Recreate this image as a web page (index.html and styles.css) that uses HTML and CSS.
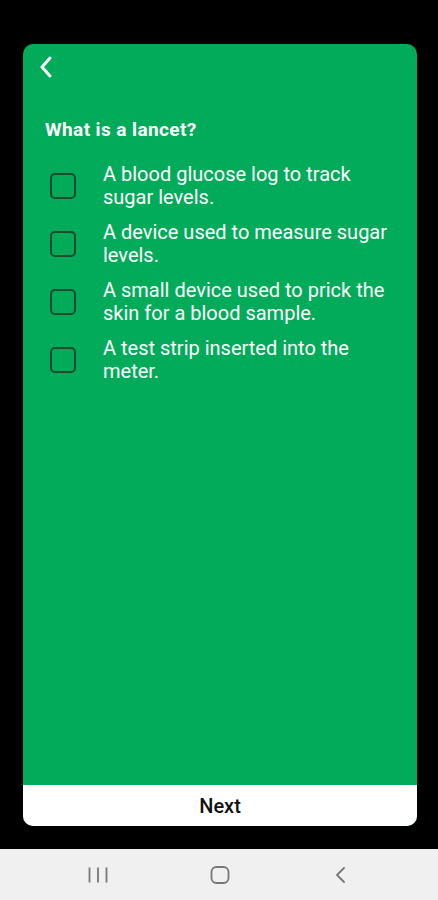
FILE: index.html
```html
<!DOCTYPE html>
<html lang="en">
<head>
  <meta charset="UTF-8">
  <meta name="viewport" content="width=device-width, initial-scale=1.0">
  <title>Quiz</title>
  <link rel="stylesheet" href="styles.css">
</head>
<body>
  <div class="screen">
    <div class="card">
      <div class="card-body">
        <button class="back-btn" aria-label="Back">
          <svg width="14" height="22" viewBox="0 0 14 22">
            <path d="M11 2 L3 11 L11 20" fill="none" stroke="#fff" stroke-width="3" stroke-linecap="round" stroke-linejoin="round"/>
          </svg>
        </button>

        <h2 class="question">What is a lancet?</h2>

        <ul class="options">
          <li class="option">
            <span class="checkbox"></span>
            <span class="option-text">A blood glucose log to track sugar levels.</span>
          </li>
          <li class="option">
            <span class="checkbox"></span>
            <span class="option-text">A device used to measure sugar levels.</span>
          </li>
          <li class="option">
            <span class="checkbox"></span>
            <span class="option-text">A small device used to prick the skin for a blood sample.</span>
          </li>
          <li class="option">
            <span class="checkbox"></span>
            <span class="option-text">A test strip inserted into the meter.</span>
          </li>
        </ul>
      </div>
      <button class="next-btn">Next</button>
    </div>
  </div>

  <nav class="nav-bar">
    <svg width="24" height="20" viewBox="0 0 24 20">
      <path d="M3.5 2.5 V17.5 M12 2.5 V17.5 M20.5 2.5 V17.5" stroke="#777" stroke-width="1.8" fill="none"/>
    </svg>
    <svg width="20" height="20" viewBox="0 0 20 20">
      <rect x="1.5" y="2" width="17" height="16" rx="5" stroke="#777" stroke-width="1.8" fill="none"/>
    </svg>
    <svg width="20" height="20" viewBox="0 0 20 20">
      <path d="M14 3 L7 10 L14 17" stroke="#777" stroke-width="1.8" fill="none" stroke-linecap="round" stroke-linejoin="round"/>
    </svg>
  </nav>
</body>
</html>
```

FILE: styles.css
```css
* {
  box-sizing: border-box;
}

body {
  margin: 0;
  padding: 0;
  background: #000;
  font-family: Roboto, "Noto Sans", sans-serif;
  width: 438px;
  height: 900px;
  display: flex;
  flex-direction: column;
  overflow: hidden;
}

.screen {
  flex: 1;
  padding: 44px 21px 23px 23px;
  display: flex;
}

.card {
  flex: 1;
  background: #02ab59;
  border-radius: 10px;
  overflow: hidden;
  display: flex;
  flex-direction: column;
}

.card-body {
  flex: 1;
  padding: 12px 14px 0 22px;
}

.back-btn {
  background: none;
  border: none;
  padding: 0;
  margin-left: -6px;
  width: 14px;
  height: 22px;
  display: block;
  cursor: pointer;
}

.question {
  color: #fff;
  font-size: 19px;
  font-weight: bold;
  letter-spacing: 0.4px;
  margin: 40px 0 0 0;
  line-height: 24px;
}

.options {
  list-style: none;
  margin: 21px 0 0 0;
  padding: 0;
  display: flex;
  flex-direction: column;
  gap: 12px;
}

.option {
  display: flex;
  align-items: center;
  gap: 27px;
}

.checkbox {
  flex: none;
  width: 26px;
  height: 26px;
  margin-left: 5px;
  border: 2px solid #1b4a2f;
  border-radius: 5px;
}

.option-text {
  color: #fff;
  font-size: 20px;
  line-height: 23px;
}

.next-btn {
  height: 41px;
  background: #fff;
  border: none;
  font-family: Roboto, "Noto Sans", sans-serif;
  font-size: 20px;
  font-weight: 500;
  color: #111;
  cursor: pointer;
}

.nav-bar {
  height: 51px;
  background: #f0f0f0;
  display: flex;
  align-items: center;
  justify-content: space-around;
  padding: 0 38px 0 36px;
}
```
